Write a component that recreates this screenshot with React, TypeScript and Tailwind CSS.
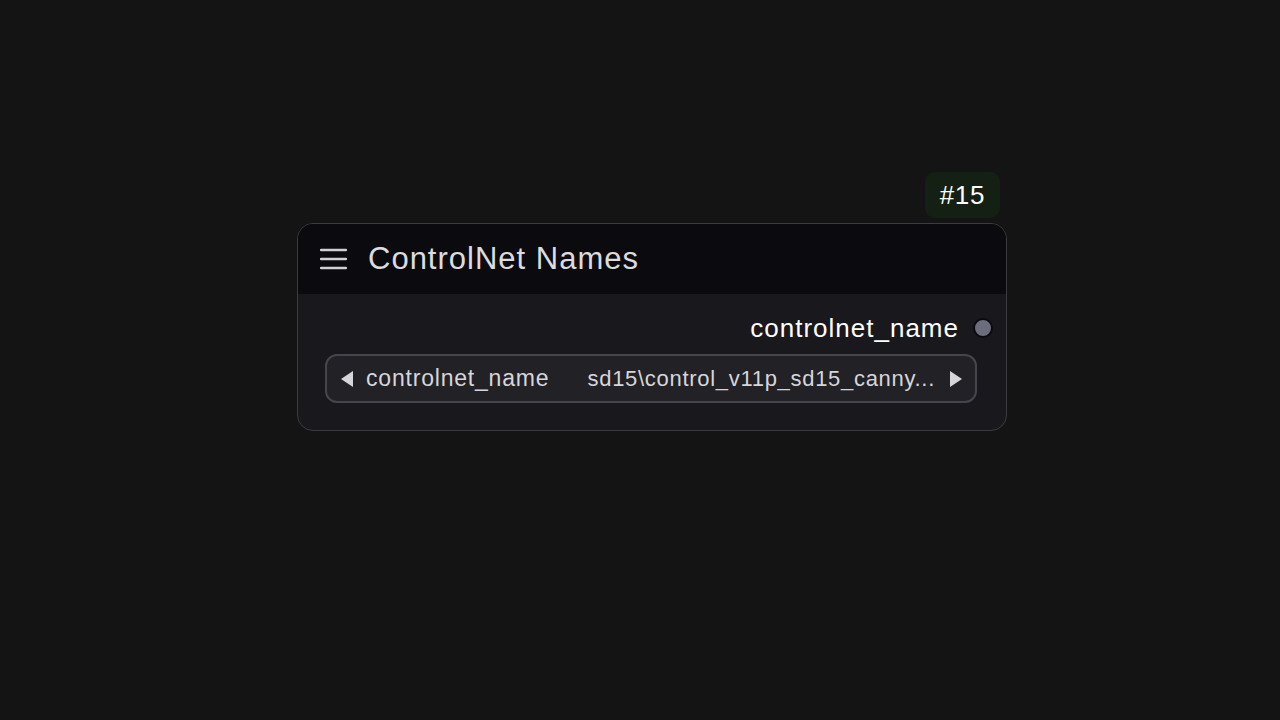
export default function App() {
    return (
        <div className="w-[1280px] h-[720px] bg-[#141414] overflow-hidden" style={{ fontFamily: '"Liberation Sans", Arial, sans-serif' }}>
            <div className="pt-[172px] pl-[297px] w-[1007px] flex flex-col">
                {/* Node id badge */}
                <div className="self-end mr-[7px] h-[46px] px-[15px] rounded-[10px] bg-[#142014] flex items-center text-[26px] tracking-[0.6px] text-white">
                    #15
                </div>

                {/* Node */}
                <div className="mt-[5px] w-[710px] rounded-[16px] border border-[#3c3c40] overflow-hidden bg-[#19181d]">
                    <div className="h-[70px] bg-[#0b0b0f] flex items-center pl-[22px] gap-[21px]">
                        <svg width="27" height="22" viewBox="0 0 27 22" className="shrink-0">
                            <path d="M1 2 H26 M1 11 H26 M1 20 H26" stroke="#d0d0d4" strokeWidth="2.4" strokeLinecap="round" />
                        </svg>
                        <span className="text-[31px] text-[#dcdcdf] tracking-[1px] pt-[1px]">ControlNet Names</span>
                    </div>

                    <div className="pt-[20px] pb-[27px] pl-[27px] pr-[29px]">
                        {/* Output slot */}
                        <div className="flex items-center justify-end gap-[14px] mr-[-16px] h-[28px]">
                            <span className="text-[26px] tracking-[1px] text-white leading-none">controlnet_name</span>
                            <span className="w-[20px] h-[20px] rounded-full bg-[#6c6d7c] border-2 border-[#0b0b0f]" />
                        </div>

                        {/* Combo widget */}
                        <div className="mt-[12px] h-[49px] rounded-[12px] border-2 border-[#45454b] bg-[#222126] flex items-center pl-[13px] pr-[12px] text-[#d6d6da]">
                            <svg width="14" height="18" viewBox="0 0 14 18" className="shrink-0">
                                <path d="M13 1 L1 9 L13 17 Z" fill="#d6d6da" />
                            </svg>
                            <span className="ml-[12px] text-[23px] tracking-[0.8px]">controlnet_name</span>
                            <span className="ml-auto mr-[14px] text-[22px] tracking-[0.7px]">sd15\control_v11p_sd15_canny...</span>
                            <svg width="14" height="18" viewBox="0 0 14 18" className="shrink-0">
                                <path d="M1 1 L13 9 L1 17 Z" fill="#d6d6da" />
                            </svg>
                        </div>
                    </div>
                </div>
            </div>
        </div>
    );
}
